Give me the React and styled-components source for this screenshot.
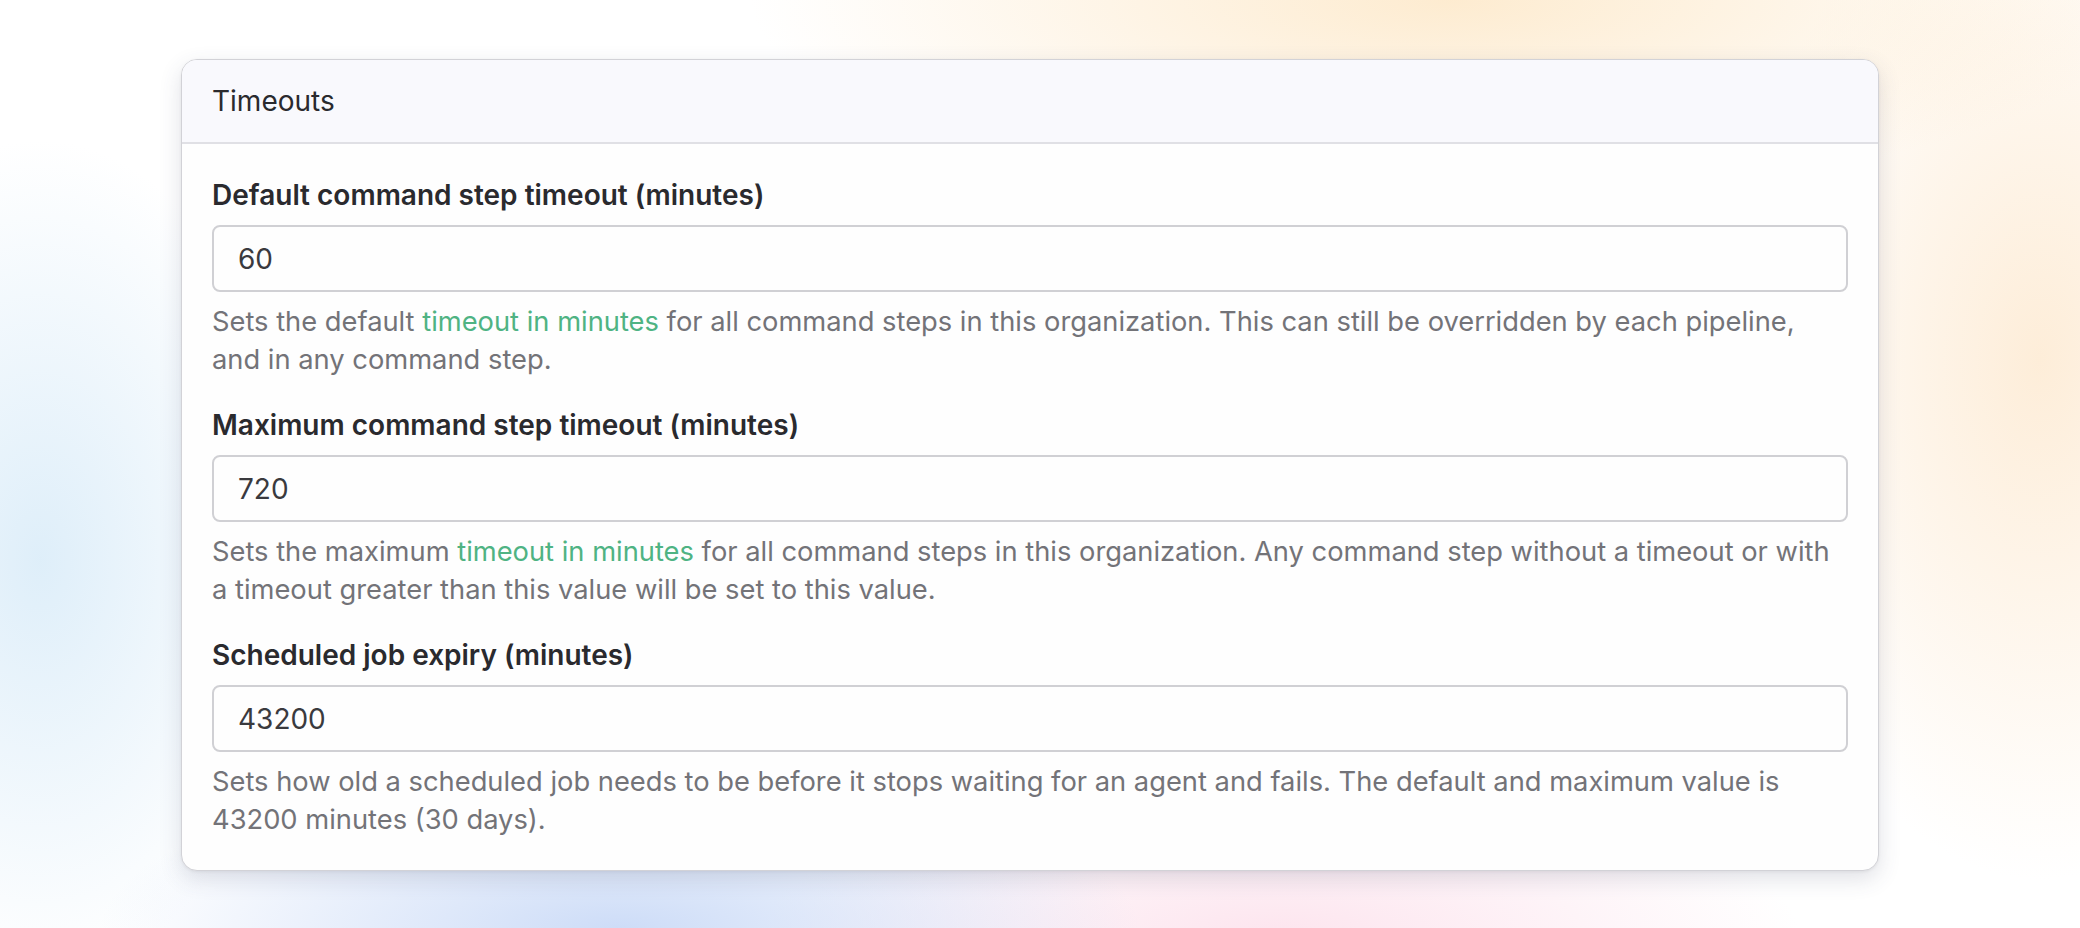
import React from 'react'
import styled, { createGlobalStyle } from 'styled-components'

const GlobalStyle = createGlobalStyle`
  html, body {
    margin: 0;
    padding: 0;
  }
  body {
    width: 2080px;
    height: 928px;
    overflow: hidden;
    font-family: Inter, "Noto Sans", "Liberation Sans", sans-serif;
    background-color: #ffffff;
    background-image:
      radial-gradient(ellipse 520px 160px at 620px 930px, rgba(196, 214, 246, 0.85), rgba(196, 214, 246, 0) 100%),
      radial-gradient(ellipse 520px 150px at 1280px 935px, rgba(252, 222, 234, 0.8), rgba(252, 222, 234, 0) 100%),
      radial-gradient(ellipse 260px 420px at 40px 560px, rgba(214, 234, 248, 0.8), rgba(214, 234, 248, 0) 100%),
      radial-gradient(ellipse 700px 200px at 1450px 0px, rgba(253, 232, 200, 0.85), rgba(253, 232, 200, 0) 100%),
      radial-gradient(ellipse 300px 520px at 2040px 360px, rgba(253, 234, 210, 0.85), rgba(253, 234, 210, 0) 100%);
  }
`

const Page = styled.div`
  box-sizing: border-box;
  width: 2080px;
  height: 928px;
  padding: 59px 0 0 181px;
`

const Card = styled.section`
  box-sizing: border-box;
  width: 1698px;
  background: #fefefe;
  border: 1px solid #d2d2d7;
  border-radius: 16px;
  overflow: hidden;
  box-shadow: 0 8px 22px rgba(60, 70, 100, 0.16), 0 1px 3px rgba(0, 0, 0, 0.06);
`

const Header = styled.header`
  box-sizing: border-box;
  height: 84px;
  display: flex;
  align-items: center;
  padding: 0 30px;
  background: #f9f9fd;
  border-bottom: 2px solid #e0e0e5;
  color: #2a2a2e;
  font-size: 28px;
  font-weight: 400;
`

const Body = styled.div`
  display: flex;
  flex-direction: column;
  gap: 29px;
  padding: 33px 30px 32px;
`

const Field = styled.div`
  display: flex;
  flex-direction: column;
`

const Label = styled.label`
  font-size: 28px;
  line-height: 36px;
  font-weight: 600;
  color: #2a2a2e;
  margin-bottom: 12px;
`

const Input = styled.input`
  box-sizing: border-box;
  width: 100%;
  height: 67px;
  padding: 0 24px;
  border: 2px solid #d0d0d4;
  border-radius: 8px;
  background: #fefefe;
  font-family: inherit;
  font-size: 28px;
  color: #3a3a3e;
  outline: none;
`

const Help = styled.p`
  margin: 11px 0 0;
  font-size: 27.3px;
  line-height: 37.5px;
  color: #737378;
`

const Link = styled.a`
  color: #4fb383;
  text-decoration: none;
`

const fields = [
  {
    id: 'default-timeout',
    label: 'Default command step timeout (minutes)',
    value: '60',
    help: (
      <>
        Sets the default <Link href="#">timeout in minutes</Link> for all command steps in this
        organization. This can still be overridden by each pipeline, and in any command step.
      </>
    ),
  },
  {
    id: 'max-timeout',
    label: 'Maximum command step timeout (minutes)',
    value: '720',
    help: (
      <>
        Sets the maximum <Link href="#">timeout in minutes</Link> for all command steps in this
        organization. Any command step without a timeout or with a timeout greater than this value
        will be set to this value.
      </>
    ),
  },
  {
    id: 'job-expiry',
    label: 'Scheduled job expiry (minutes)',
    value: '43200',
    help: (
      <>
        Sets how old a scheduled job needs to be before it stops waiting for an agent and fails. The
        default and maximum value is 43200 minutes (30 days).
      </>
    ),
  },
]

const App = () => {
  return (
    <Page>
      <GlobalStyle />
      <Card>
        <Header>Timeouts</Header>
        <Body>
          {fields.map((f) => (
            <Field key={f.id}>
              <Label htmlFor={f.id}>{f.label}</Label>
              <Input id={f.id} type="text" defaultValue={f.value} />
              <Help>{f.help}</Help>
            </Field>
          ))}
        </Body>
      </Card>
    </Page>
  )
}

export default App
